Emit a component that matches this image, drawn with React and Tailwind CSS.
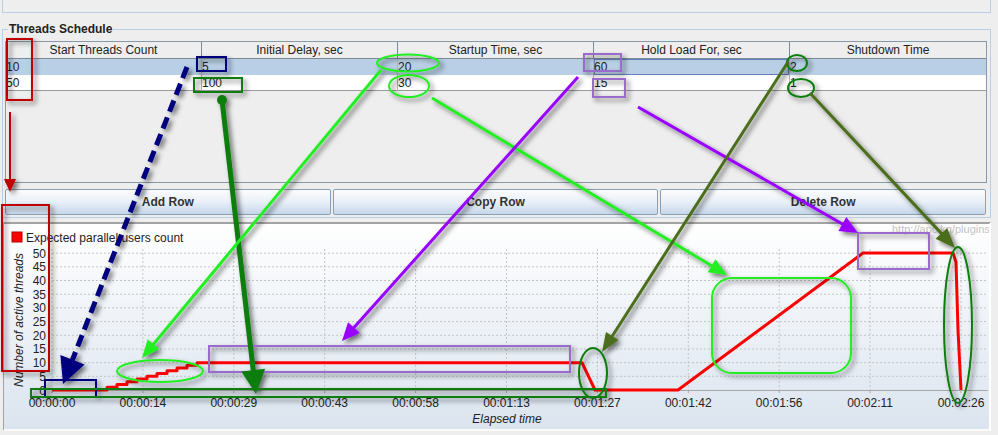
import React from 'react';

const headers = ['Start Threads Count', 'Initial Delay, sec', 'Startup Time, sec', 'Hold Load For, sec', 'Shutdown Time'];
const rows = [
  ['10', '5', '20', '60', '2'],
  ['50', '100', '30', '15', '1'],
];

const tickX = Array.from({ length: 11 }, (_, i) => 52 + i * 90.9);
const tickLabels = ['00:00:00', '00:00:14', '00:00:29', '00:00:43', '00:00:58', '00:01:13', '00:01:27', '00:01:42', '00:01:56', '00:02:11', '00:02:26'];
const yv = (v) => 390 - v * 2.737;

function redPoints() {
  const pts = [[52, 390], [107, 390]];
  for (let i = 0; i < 10; i++) {
    const x = 107 + i * 10;
    pts.push([x, yv(i + 1)]);
    pts.push([x + 10, yv(i + 1)]);
  }
  pts.push([582, yv(10)], [595, 390], [678, 390], [863, 253], [953, 253], [956, 262], [958, 330], [961, 390]);
  return pts.map((p) => p.join(',')).join(' ');
}

function Chart() {
  return (
    <svg width="985" height="205" viewBox="4 224 985 205" className="block" fontFamily="'Liberation Sans', Arial, sans-serif">
      <rect x="12" y="232" width="10" height="10" fill="#ff0000" stroke="#b00000" />
      <text x="26" y="242" fontSize="12" fill="#222">Expected parallel users count</text>
      <text x="892" y="233" fontSize="11" fill="#c4c4c4">http://apc.kg/plugins</text>

      {[5, 10, 15, 20, 25, 30, 35, 40, 45, 50].map((v) => (
        <line key={v} x1="52" x2="988" y1={yv(v)} y2={yv(v)} stroke="#c4c4c4" strokeDasharray="2 2" />
      ))}
      {tickX.map((x) => (
        <line key={x} x1={x} x2={x} y1="249" y2="390" stroke="#c4c4c4" strokeDasharray="2 2" />
      ))}
      <line x1="52" x2="988" y1="390.5" y2="390.5" stroke="#a8a8a8" />
      {tickX.map((x) => (
        <line key={'t' + x} x1={x} x2={x} y1="390" y2="393" stroke="#a8a8a8" />
      ))}

      {[0, 5, 10, 15, 20, 25, 30, 35, 40, 45, 50].map((v) => (
        <text key={v} x="46" y={yv(v) + 4.5} fontSize="12" fill="#222" textAnchor="end">{v}</text>
      ))}
      {tickX.map((x, i) => (
        <text key={'l' + i} x={x} y="407" fontSize="12" fill="#222" textAnchor="middle">{tickLabels[i]}</text>
      ))}
      <text x="0" y="0" fontSize="12" fill="#222" fontStyle="italic" textAnchor="middle" transform="translate(23 320) rotate(-90)">
        Number of active threads
      </text>
      <text x="507" y="423" fontSize="12" fill="#222" fontStyle="italic" textAnchor="middle">Elapsed time</text>

      <polyline points={redPoints()} fill="none" stroke="#ff0000" strokeWidth="3" strokeLinejoin="round" />
    </svg>
  );
}

function Arrow({ x1, y1, x2, y2, color, w = 3, head = 18, hw = 14, dash }) {
  const dx = x2 - x1;
  const dy = y2 - y1;
  const len = Math.hypot(dx, dy);
  const ux = dx / len;
  const uy = dy / len;
  const bx = x2 - ux * head;
  const by = y2 - uy * head;
  const px = (-uy * hw) / 2;
  const py = (ux * hw) / 2;
  return (
    <g>
      <line x1={x1} y1={y1} x2={bx + ux * 2} y2={by + uy * 2} stroke={color} strokeWidth={w} strokeDasharray={dash} />
      <polygon points={`${x2},${y2} ${bx + px},${by + py} ${bx - px},${by - py}`} fill={color} />
    </g>
  );
}

function Annotations() {
  const red = '#c00000';
  const navy = '#00007f';
  const green = '#0a7d0a';
  const lime = '#22ee22';
  const lav = '#9a6acc';
  const violet = '#9900ff';
  const olive = '#4b6e1c';
  return (
    <svg className="absolute left-0 top-0 pointer-events-none" width="998" height="435" viewBox="0 0 998 435">
      <defs>
        <filter id="sh" filterUnits="userSpaceOnUse" x="0" y="0" width="998" height="435">
          <feDropShadow dx="3" dy="3" stdDeviation="2.5" floodColor="#000" floodOpacity="0.55" />
        </filter>
      </defs>
      <g filter="url(#sh)" fill="none" strokeWidth="2">
        <rect x="7" y="39" width="25" height="61" stroke={red} />
        <rect x="2" y="205" width="47" height="166" stroke={red} />
        <rect x="197" y="57" width="29" height="14" stroke={navy} />
        <rect x="45" y="380" width="51" height="17" stroke={navy} />
        <rect x="194" y="78" width="48" height="14" stroke={green} />
        <rect x="31" y="389" width="575" height="8" stroke={green} />
        <ellipse cx="408" cy="63" rx="31" ry="8.5" stroke={lime} />
        <ellipse cx="409" cy="86" rx="20" ry="11" stroke={lime} />
        <ellipse cx="160" cy="371" rx="43" ry="11" stroke={lime} />
        <rect x="712" y="278" width="139" height="95" rx="20" stroke={lime} />
        <rect x="584" y="54" width="37" height="17" stroke={lav} />
        <rect x="593" y="79" width="32" height="18" stroke={lav} />
        <rect x="209" y="346" width="361" height="26" stroke={lav} />
        <rect x="858" y="233" width="71" height="36" stroke={lav} />
        <ellipse cx="797" cy="63" rx="10" ry="8" stroke={green} />
        <ellipse cx="801" cy="88" rx="13" ry="9" stroke={green} />
        <ellipse cx="593" cy="373" rx="14" ry="25" stroke={green} />
        <ellipse cx="958" cy="325" rx="14" ry="78" stroke={green} />

        <Arrow x1={10} y1={112} x2={10} y2={192} color={red} w={2} head={13} hw={12} />
        <Arrow x1={187} y1={67} x2={63} y2={384} color={navy} w={5} head={26} hw={26} dash="12 6" />
        <circle cx="222" cy="100" r="5" fill={green} stroke="none" />
        <Arrow x1={222} y1={100} x2={256} y2={394} color={green} w={5} head={24} hw={24} />
        <Arrow x1={381} y1={70} x2={142} y2={358} color={lime} w={3} head={18} hw={15} />
        <Arrow x1={432} y1={98} x2={727} y2={275} color={lime} w={3} head={18} hw={15} />
        <Arrow x1={578} y1={77} x2={342} y2={341} color={violet} w={3} head={18} hw={16} />
        <Arrow x1={638} y1={107} x2={858} y2={233} color={violet} w={3} head={18} hw={16} />
        <Arrow x1={788} y1={62} x2={602} y2={352} color={olive} w={3} head={19} hw={15} />
        <Arrow x1={810} y1={93} x2={955} y2={248} color={olive} w={3} head={20} hw={16} />
      </g>
    </svg>
  );
}

export default function App() {
  return (
    <div className="relative w-[998px] h-[435px] overflow-hidden bg-[#eeeeee] text-[#222] font-['Liberation_Sans',Arial,sans-serif]">
      <div className="ml-[2px] w-[989px] h-[13px] border-x border-b border-[#b8cfe5]" />

      <div className="relative mt-[16px] ml-[2px] w-[989px] h-[189px] border border-[#b8cfe5] px-[2px] pt-[11px] pb-[2px]">
        <span className="absolute -top-[8px] left-[5px] px-[1px] bg-[#eeeeee] text-[12px] leading-[14px] font-bold text-[#222]">
          Threads Schedule
        </span>

        <div className="w-[982px] h-[142px] border border-[#8a99a8] bg-[#eeeeee]">
          <div className="grid grid-cols-5 h-[17px] border-b border-[#7a8a99] bg-[#eeeeee]">
            {headers.map((h, i) => (
              <div key={h} className={`text-center text-[12px] leading-[16px] text-[#222] ${i < 4 ? 'border-r border-[#7a8a99]' : ''}`}>
                {h}
              </div>
            ))}
          </div>
          {rows.map((r, ri) => (
            <div key={ri} className={`grid grid-cols-5 h-[16px] ${ri === 0 ? 'bg-[#b8cfe5]' : 'bg-white border-b border-[#9a9a9a]'}`}>
              {r.map((c, ci) => (
                <div
                  key={ci}
                  className={`text-[12px] leading-[16px] text-[#222] ${ci < 4 ? 'border-r border-[#b4b4b4]' : ''} ${ri === 0 && ci === 3 ? 'shadow-[inset_0_0_0_1px_#6382bf]' : ''}`}
                >
                  {c}
                </div>
              ))}
            </div>
          ))}
        </div>

        <div className="flex gap-[2px] mt-[6px] w-[981px]">
          {['Add Row', 'Copy Row', 'Delete Row'].map((b) => (
            <button
              key={b}
              className="flex-1 h-[26px] border border-[#8ca0b4] rounded-[2px] bg-linear-to-b from-[#fbfcfe] via-[#e9f0f8] to-[#c6d7ea] text-[12px] font-bold text-[#333]"
            >
              {b}
            </button>
          ))}
        </div>
      </div>

      <div className="mt-[4px] ml-[3px] w-[988px] h-[209px] border-t-2 border-l border-[#a3a3a3] border-r-2 border-r-white border-b-2 border-b-[#fafafa] bg-linear-to-b from-white to-[#dbe4ef]">
        <Chart />
      </div>

      <Annotations />
    </div>
  );
}
